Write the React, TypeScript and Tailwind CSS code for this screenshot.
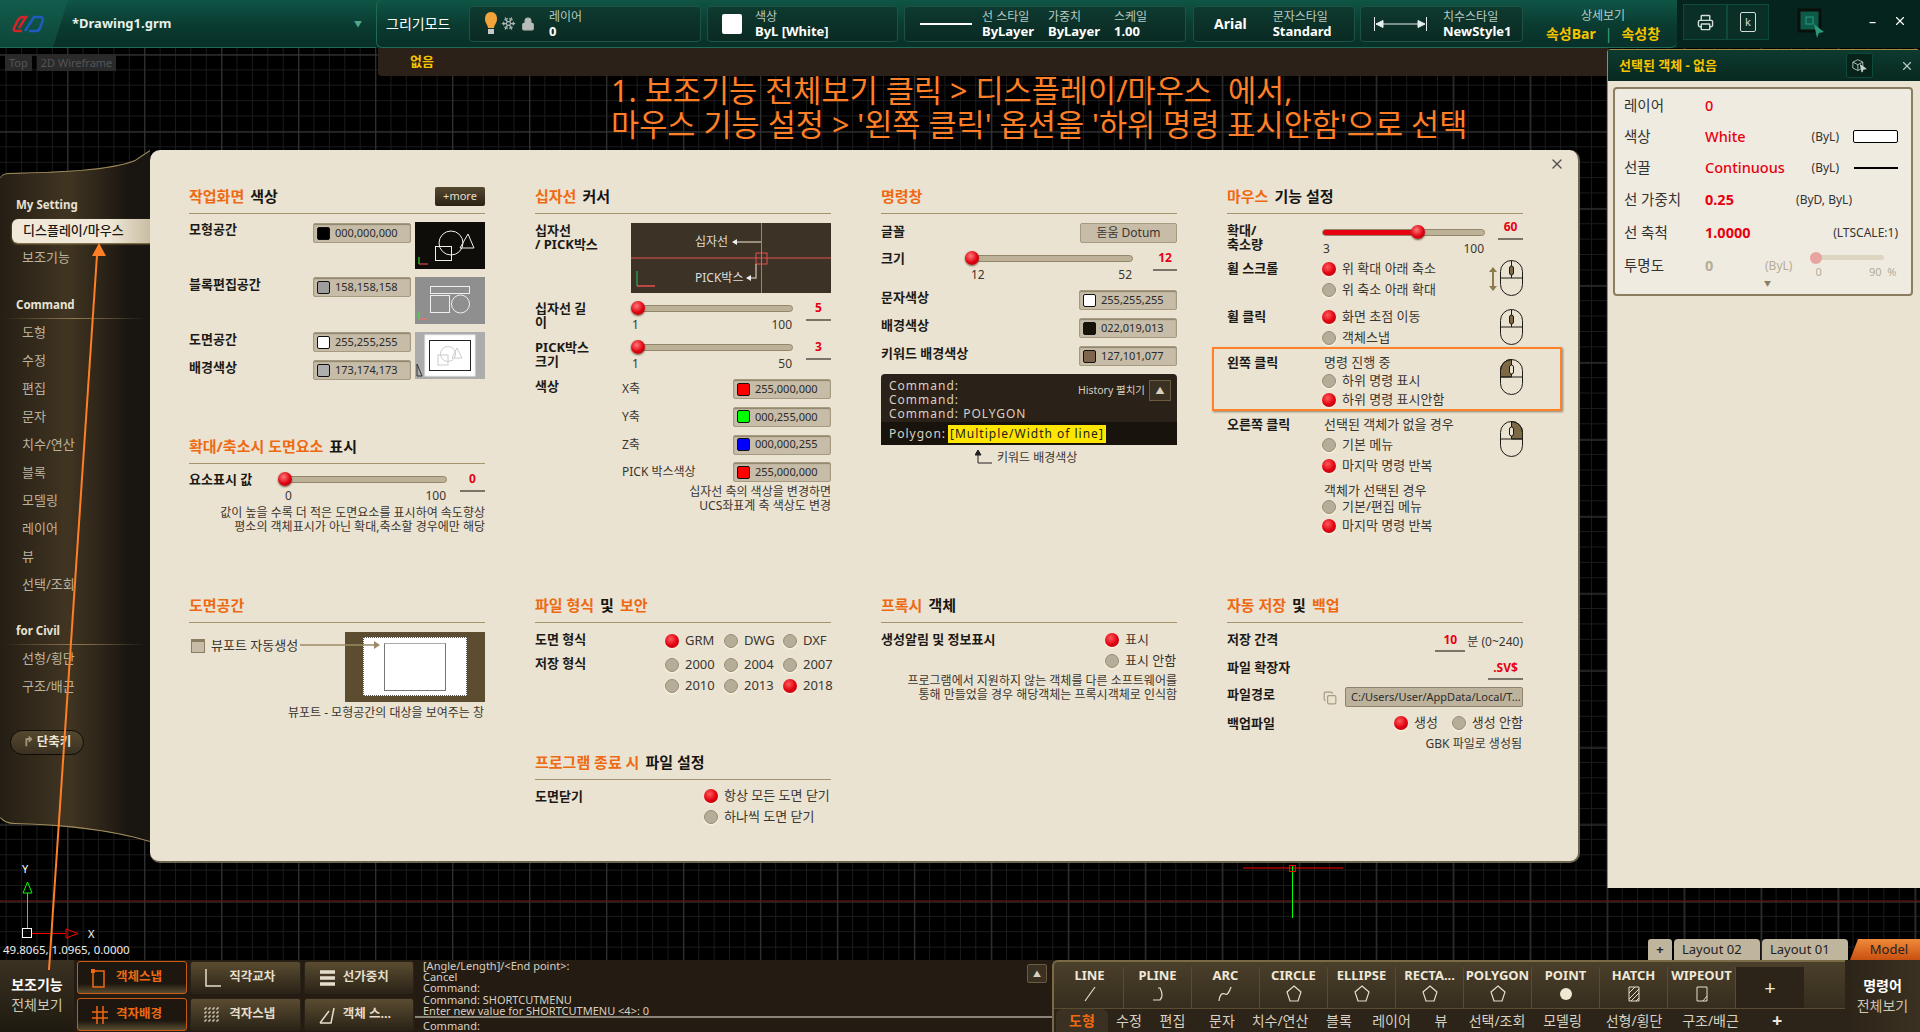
import type { ReactNode } from "react";
import { Copy, Lock, Printer, Snowflake, X } from "lucide-react";

const red = "text-[#e60012]";

const Title = ({ parts }: { parts: [string, boolean][] }) => (
  <div className="flex gap-[6px] text-[15px] font-bold leading-[18px]">
    {parts.map(([text, accent]) => (
      <span key={text} className={accent ? "text-[#ee6a12]" : "text-[#171512]"}>
        {text}
      </span>
    ))}
  </div>
);

const Section = ({ parts, right, children }: { parts: [string, boolean][]; right?: ReactNode; children: ReactNode }) => (
  <div>
    <div className="flex h-[27px] items-start justify-between border-b border-[#a6946f]">
      <Title parts={parts} />
      {right}
    </div>
    {children}
  </div>
);

const Label = ({ children, className = "" }: { children: ReactNode; className?: string }) => (
  <div className={`shrink-0 text-[13px] font-bold leading-[14px] text-[#1c1a16] ${className}`}>{children}</div>
);

const Note = ({ children, className = "" }: { children: ReactNode; className?: string }) => (
  <div className={`text-right text-[12px] leading-[13.5px] text-[#3a3630] ${className}`}>{children}</div>
);

const Knob = ({ left }: { left: number }) => (
  <div
    className="absolute top-1/2 size-[14px] -translate-y-1/2 rounded-full bg-[radial-gradient(circle_at_40%_35%,#ff7a7a,#e00010_55%,#8e0c0e)] shadow-[0_1px_2px_#6b5c40]"
    style={{ left }}
  />
);

const Slider = ({
  width,
  min,
  max,
  pos = 0,
  fill = 0,
  minClass = "pl-[1px]",
}: {
  width: string;
  min: string;
  max: string;
  pos?: number;
  fill?: number;
  minClass?: string;
}) => (
  <div className={width}>
    <div className="relative flex h-[14px] items-center">
      <div className="h-[7px] w-full overflow-hidden rounded-full border border-[#94866a] bg-[#bdb197]">
        {fill > 0 && <div className="h-full bg-[#e60012]" style={{ width: fill }} />}
      </div>
      <Knob left={pos} />
    </div>
    <div className={`flex h-[20px] items-center justify-between pr-[1px] text-[12px] text-[#3a3630] ${minClass}`}>
      <span>{min}</span>
      <span>{max}</span>
    </div>
  </div>
);

const Value = ({ children, className = "w-[25px]" }: { children: ReactNode; className?: string }) => (
  <div className={`h-[20px] border-b-2 border-[#7a7468] text-center text-[12px] font-bold leading-[14px] ${red} ${className}`}>
    {children}
  </div>
);

const Swatch = ({ color, text, className = "" }: { color: string; text: string; className?: string }) => (
  <div
    className={`flex h-[20px] w-[98px] items-center gap-[5px] rounded-[2px] border border-[#a69a80] bg-[#c6bca7] pl-[3px] text-[11px] text-[#2b2b2b] shadow-[inset_0_1px_1px_#8d826b] ${className}`}
  >
    <span className={`size-[13px] rounded-[2px] border border-[#111] ${color}`} />
    {text}
  </div>
);

const Radio = ({ on = false, label, tight = false }: { on?: boolean; label: string; tight?: boolean }) => (
  <div className={`flex items-center gap-[6px] text-[13px] text-[#3a3630] ${tight ? "h-[19px]" : "h-[21px]"}`}>
    <span
      className={`size-[14px] shrink-0 rounded-full shadow-[0_1px_2px_#fff8e0] ${
        on
          ? "bg-[radial-gradient(circle_at_40%_35%,#ff5a5a,#e00010_55%,#a00d10)]"
          : "border border-[#958d78] bg-[#b5ad98]"
      }`}
    />
    {label}
  </div>
);

const MouseIcon = ({ mode }: { mode: "wheel" | "left" | "right" }) => (
  <svg viewBox="0 0 23 36" className="h-[36px] w-[23px] shrink-0" fill="none" stroke="#1c1a16" strokeWidth="1">
    {mode === "left" && <path d="M11.5 .5 A11 11 0 0 0 .5 11.5 V18 H11.5 Z" fill="#7d6a44" />}
    {mode === "right" && <path d="M11.5 .5 A11 11 0 0 1 22.5 11.5 V18 H11.5 Z" fill="#7d6a44" />}
    <rect x=".5" y=".5" width="22" height="35" rx="11" />
    <path d="M.5 18 H22.5 M11.5 .5 V18" />
    <rect x="9.5" y="6" width="4" height="9" rx="2" fill={mode === "wheel" ? "#7d6a44" : "#ebe3d2"} />
  </svg>
);

const Preview = ({ kind }: { kind: "model" | "block" | "paper" }) => {
  if (kind === "model")
    return (
      <svg viewBox="0 0 70 47" className="h-[47px] w-[70px] bg-[#0f0d0a]" fill="none" stroke="#eee">
        <rect x="20.5" y="24.5" width="16" height="14" />
        <circle cx="36" cy="21" r="12" />
        <path d="M53 12 L45 26 H59 Z" />
        <path d="M4 35 V42" stroke="#2f2" />
        <path d="M4 42 H13" stroke="#f55" />
      </svg>
    );
  if (kind === "block")
    return (
      <svg viewBox="0 0 70 47" className="h-[47px] w-[70px] bg-[#8f8f8f]" fill="none" stroke="#eee">
        <rect x="15.5" y="9.5" width="39" height="7" />
        <rect x="15.5" y="18.5" width="19" height="17" />
        <circle cx="45.5" cy="27" r="9" />
        <path d="M4 35 V42" stroke="#2f2" />
        <path d="M4 42 H13" stroke="#f66" />
      </svg>
    );
  return (
    <svg viewBox="0 0 70 47" className="h-[47px] w-[70px] bg-[#acacac]" fill="none">
      <rect x="10" y="3" width="50" height="41" fill="#fff" stroke="#eee" />
      <rect x="14.5" y="8.5" width="41" height="30" stroke="#222" />
      <rect x="23" y="23" width="10" height="10" stroke="#ccc" />
      <circle cx="33" cy="22" r="7.5" stroke="#ccc" />
      <path d="M42 16 L37 26 H47 Z" stroke="#ccc" />
      <path d="M2 44 V32 L7 44 Z" stroke="#333" />
    </svg>
  );
};

const CrosshairPreview = () => (
  <svg viewBox="0 0 200 70" className="h-[70px] w-[200px] bg-[#3c3326]" fill="none">
    <path d="M0 35 H200" stroke="#e65050" />
    <path d="M130.5 0 V70" stroke="#22c55e" />
    <rect x="125" y="30" width="11" height="11" stroke="#e65050" />
    <path d="M130 19 H102 M125 41 V55 H116" stroke="#b5ad98" strokeWidth="1.5" />
    <path d="M101 19 l5 -3 v6 Z M115 55 l5 -3 v6 Z" fill="#eee" />
    <path d="M6 48 V63" stroke="#22c55e" />
    <path d="M6 63 H24" stroke="#e65050" strokeWidth="1.5" />
    <text x="64" y="23" fontSize="12" fill="#ddd">십자선</text>
    <text x="64" y="59" fontSize="12" fill="#ddd">PICK박스</text>
  </svg>
);

const CommandSample = () => (
  <div className="mt-[8px] h-[71px] w-[296px] overflow-hidden rounded-t-[4px] bg-[#2a2118] text-[12px] tracking-[1px] text-[#d8d0c0]">
    <div className="flex h-[48px] justify-between pl-[8px] pr-[6px] pt-[5px]">
      <div className="leading-[14px]">
        <div>Command:</div>
        <div>Command:</div>
        <div>Command: POLYGON</div>
      </div>
      <div className="flex items-start gap-[4px] pt-[1px] text-[10.5px] tracking-normal">
        <span className="mt-[3px]">History 펼치기</span>
        <span className="flex h-[21px] w-[22px] items-center justify-center border border-[#6b5c40] bg-[#3a3122] text-[9px]">▲</span>
      </div>
    </div>
    <div className="flex h-[23px] items-center gap-[2px] bg-[#18130d] pl-[8px]">
      <span>Polygon:</span>
      <span className="bg-[#ffe600] px-[2px] text-[#222]">[Multiple/Width of line]</span>
    </div>
  </div>
);

const ColumnOne = () => (
  <>
    <div>
      <Section
        parts={[["작업화면", true], ["색상", false]]}
        right={
          <div className="flex h-[19px] w-[50px] items-center justify-center rounded-[2px] bg-[linear-gradient(#55482f,#2b2317)] text-[11px] text-[#e6decc]">
            +more
          </div>
        }
      >
        <div className="mt-[8px] flex h-[47px] justify-between">
          <div className="flex w-[222px] justify-between">
            <Label>모형공간</Label>
            <Swatch color="bg-black" text="000,000,000" className="mt-[1px]" />
          </div>
          <Preview kind="model" />
        </div>
        <div className="mt-[8px] flex h-[47px] justify-between">
          <div className="flex w-[222px] justify-between">
            <Label>블록편집공간</Label>
            <Swatch color="bg-[#9e9e9e]" text="158,158,158" />
          </div>
          <Preview kind="block" />
        </div>
        <div className="mt-[8px] flex h-[47px] justify-between">
          <div className="flex w-[222px] flex-col gap-[8px]">
            <div className="flex justify-between">
              <Label>도면공간</Label>
              <Swatch color="bg-white" text="255,255,255" />
            </div>
            <div className="flex justify-between">
              <Label>배경색상</Label>
              <Swatch color="bg-[#adaead]" text="173,174,173" />
            </div>
          </div>
          <Preview kind="paper" />
        </div>
      </Section>
      <div className="mt-[58px]">
        <Section parts={[["확대/축소시 도면요소", true], ["표시", false]]}>
          <div className="mt-[8px] flex">
            <Label className="w-[89px]">요소표시 값</Label>
            <Slider width="w-[169px]" min="0" max="100" minClass="pl-[7px]" />
            <Value className="ml-[13px] w-[25px]">0</Value>
          </div>
          <Note>
            값이 높을 수록 더 적은 도면요소를 표시하여 속도향상
            <br />
            평소의 객체표시가 아닌 확대,축소할 경우에만 해당
          </Note>
        </Section>
      </div>
    </div>
    <Section parts={[["도면공간", true]]}>
      <div className="relative mt-[9px] flex h-[70px] items-start justify-between">
        <div className="flex items-center gap-[6px] pl-[2px] pt-[4px] text-[13px] text-[#3a3630]">
          <span className="size-[14px] border border-[#8b7d61] bg-[linear-gradient(#8b7d61_2px,#c6bca7_2px)]" />
          뷰포트 자동생성
        </div>
        <div className="flex h-[70px] w-[140px] items-start justify-center bg-[#5c4c30] pt-[5px]">
          <div className="flex h-[59px] w-[104px] justify-center border border-dotted border-[#555] bg-white pt-[5px]">
            <div className="h-[48px] w-[62px] border border-[#777] border-t-[#aaa]" />
          </div>
        </div>
        <svg viewBox="0 0 80 8" className="absolute left-[111px] top-[9px] h-[8px] w-[80px]">
          <path d="M0 4 H74" stroke="#9b8a64" strokeWidth="1.5" />
          <path d="M74 0 L80 4 L74 8 Z" fill="#9b8a64" />
        </svg>
      </div>
      <Note className="mt-[4px] pr-[1px]">뷰포트 - 모형공간의 대상을 보여주는 창</Note>
    </Section>
  </>
);

const AxisRow = ({ axis, color, text, label }: { axis: string; color: string; text: string; label?: string }) => (
  <div className="flex h-[20px]">
    <Label className="w-[87px]">{label}</Label>
    <div className="w-[111px] pt-[1px] text-[12px] text-[#3a3630]">{axis}</div>
    <Swatch color={color} text={text} />
  </div>
);

const ColumnTwo = () => (
  <>
    <Section parts={[["십자선", true], ["커서", false]]}>
      <div className="mt-[9px] flex">
        <Label className="w-[96px]">
          십자선
          <br />/ PICK박스
        </Label>
        <CrosshairPreview />
      </div>
      <div className="mt-[8px] flex">
        <Label className="w-[96px]">
          십자선 길
          <br />이
        </Label>
        <Slider width="w-[162px]" min="1" max="100" />
        <Value className="ml-[13px] w-[25px]">5</Value>
      </div>
      <div className="mt-[5px] flex">
        <Label className="w-[96px]">
          PICK박스
          <br />
          크기
        </Label>
        <Slider width="w-[162px]" min="1" max="50" />
        <Value className="ml-[13px] w-[25px]">3</Value>
      </div>
      <div className="mt-[5px] flex flex-col gap-[7.75px]">
        <AxisRow label="색상" axis="X축" color="bg-[#ff0000]" text="255,000,000" />
        <AxisRow axis="Y축" color="bg-[#00ff00]" text="000,255,000" />
        <AxisRow axis="Z축" color="bg-[#0000ff]" text="000,000,255" />
        <AxisRow axis="PICK 박스색상" color="bg-[#ff0000]" text="255,000,000" />
      </div>
      <Note className="mt-[3px]">
        십자선 축의 색상을 변경하면
        <br />
        UCS좌표계 축 색상도 변경
      </Note>
    </Section>
    <div>
      <Section parts={[["파일 형식", true], ["및", false], ["보안", true]]}>
        <div className="mt-[7px] flex">
          <Label className="w-[130px] pt-[2px]">도면 형식</Label>
          <div className="grid grid-cols-[59px_59px_47px]">
            <Radio on label="GRM" />
            <Radio label="DWG" />
            <Radio label="DXF" />
          </div>
        </div>
        <div className="mt-[3px] flex">
          <Label className="w-[130px] pt-[2px]">저장 형식</Label>
          <div className="grid grid-cols-[59px_59px_47px]">
            <Radio label="2000" />
            <Radio label="2004" />
            <Radio label="2007" />
            <Radio label="2010" />
            <Radio label="2013" />
            <Radio on label="2018" />
          </div>
        </div>
      </Section>
      <div className="mt-[57px]">
        <Section parts={[["프로그램 종료 시", true], ["파일 설정", false]]}>
          <div className="mt-[5px] flex">
            <Label className="w-[169px] pt-[4px]">도면닫기</Label>
            <div>
              <Radio on label="항상 모든 도면 닫기" />
              <Radio label="하나씩 도면 닫기" />
            </div>
          </div>
        </Section>
      </div>
    </div>
  </>
);

const ColumnThree = () => (
  <>
    <Section parts={[["명령창", true]]}>
      <div className="mt-[9px] flex h-[20px] justify-between">
        <Label className="pt-[1px]">글꼴</Label>
        <div className="flex h-[20px] w-[97px] items-center justify-center rounded-[2px] border border-[#a69a80] bg-[#c6bca7] text-[12px] text-[#3a3630]">
          돋움 Dotum
        </div>
      </div>
      <div className="mt-[8px] flex">
        <Label className="w-[84px]">크기</Label>
        <Slider width="w-[168px]" min="12" max="52" minClass="pl-[6px]" />
        <Value className="ml-[20px] w-[24px]">12</Value>
      </div>
      <div className="mt-[5px] flex flex-col gap-[8px]">
        <div className="flex justify-between">
          <Label>문자색상</Label>
          <Swatch color="bg-white" text="255,255,255" />
        </div>
        <div className="flex justify-between">
          <Label>배경색상</Label>
          <Swatch color="bg-[#161309]" text="022,019,013" />
        </div>
        <div className="flex justify-between">
          <Label>키워드 배경색상</Label>
          <Swatch color="bg-[#7f654d]" text="127,101,077" />
        </div>
      </div>
      <CommandSample />
      <div className="flex h-[22px] items-end gap-[5px] pl-[94px] text-[12px] text-[#3a3630]">
        <svg viewBox="0 0 17 16" className="mb-[1px] h-[16px] w-[17px]" fill="none" stroke="#222">
          <path d="M3 1 V13 H17" />
          <path d="M0 5 L3 0 L6 5 Z" fill="#222" />
        </svg>
        키워드 배경색상
      </div>
    </Section>
    <Section parts={[["프록시", true], ["객체", false]]}>
      <div className="mt-[6px] flex">
        <Label className="w-[224px] pt-[3px]">생성알림 및 정보표시</Label>
        <div>
          <Radio on label="표시" />
          <Radio label="표시 안함" />
        </div>
      </div>
      <Note className="mt-[3px]">
        프로그램에서 지원하지 않는 객체를 다른 소프트웨어를
        <br />
        통해 만들었을 경우 해당객체는 프록시객체로 인식함
      </Note>
    </Section>
  </>
);

const ColumnFour = () => (
  <>
    <Section parts={[["마우스", true], ["기능 설정", false]]}>
      <div className="mt-[9px] flex">
        <Label className="w-[95px]">
          확대/
          <br />
          축소량
        </Label>
        <div className="pt-[2px]">
          <Slider width="w-[163px]" min="3" max="100" pos={89} fill={96} />
        </div>
        <Value className="ml-[13px] -mt-[3px] w-[25px]">60</Value>
      </div>
      <div className="-mt-[1px] flex h-[42px]">
        <Label className="w-[95px] pt-[3px]">휠 스크롤</Label>
        <div className="flex-1">
          <Radio on label="위 확대 아래 축소" />
          <Radio label="위 축소 아래 확대" />
        </div>
        <svg viewBox="0 0 8 24" className="mr-[3px] mt-[9px] h-[24px] w-[8px]" fill="#8d7a4f">
          <path d="M4 0 L8 5 H5 V19 H8 L4 24 L0 19 H3 V5 H0 Z" />
        </svg>
        <div className="pt-[2px]">
          <MouseIcon mode="wheel" />
        </div>
      </div>
      <div className="mt-[6px] flex h-[42px]">
        <Label className="w-[95px] pt-[3px]">휠 클릭</Label>
        <div className="flex-1">
          <Radio on label="화면 초점 이동" />
          <Radio label="객체스냅" />
        </div>
        <div className="pt-[3px]">
          <MouseIcon mode="wheel" />
        </div>
      </div>
      <div className="-ml-[15px] -mt-[1px] flex h-[64px] w-[350px] border-2 border-[#ff8128] pl-[13px] pr-[37px] shadow-[1px_1px_2px_#8d826b]">
        <Label className="w-[95px] pt-[6px]">왼쪽 클릭</Label>
        <div className="flex-1 pt-[6px]">
          <div className="pl-[2px] text-[13px] leading-[14px] text-[#3a3630]">명령 진행 중</div>
          <div className="mt-[2px]">
            <Radio tight label="하위 명령 표시" />
            <Radio tight on label="하위 명령 표시안함" />
          </div>
        </div>
        <div className="pt-[10px]">
          <MouseIcon mode="left" />
        </div>
      </div>
      <div className="mt-[6px] flex">
        <Label className="w-[95px]">오른쪽 클릭</Label>
        <div className="flex-1">
          <div className="pl-[2px] text-[13px] leading-[14px] text-[#3a3630]">선택된 객체가 없을 경우</div>
          <div className="mt-[3px]">
            <Radio label="기본 메뉴" />
            <Radio on label="마지막 명령 반복" />
          </div>
          <div className="mt-[7px] pl-[2px] text-[13px] leading-[14px] text-[#3a3630]">객체가 선택된 경우</div>
          <Radio tight label="기본/편집 메뉴" />
          <Radio tight on label="마지막 명령 반복" />
        </div>
        <div className="pt-[4px]">
          <MouseIcon mode="right" />
        </div>
      </div>
    </Section>
    <Section parts={[["자동 저장", true], ["및", false], ["백업", true]]}>
      <div className="mt-[7px] flex h-[22px] items-start">
        <Label className="pt-[2px]">저장 간격</Label>
        <div className="ml-auto flex items-start text-[12px] text-[#3a3630]">
          <div className={`h-[22px] w-[30px] border-b-2 border-[#7a7468] text-center font-bold leading-[20px] ${red}`}>10</div>
          <span className="ml-[2px] mt-[3px]">분 (0~240)</span>
        </div>
      </div>
      <div className="mt-[6px] flex h-[22px] items-start justify-between">
        <Label className="pt-[2px]">파일 확장자</Label>
        <div className={`h-[22px] w-[35px] border-b-2 border-[#7a7468] text-center text-[12px] font-bold leading-[20px] ${red}`}>.SV$</div>
      </div>
      <div className="mt-[7px] flex h-[20px] items-start">
        <Label>파일경로</Label>
        <Copy className="ml-auto mt-[4px] size-[14px] text-[#a69a80]" />
        <div className="ml-[8px] flex h-[20px] w-[178px] items-center rounded-[2px] border border-[#8d826b] bg-[#bdb39d] pl-[5px] text-[11px] text-[#2b2b2b]">
          C:/Users/User/AppData/Local/T...
        </div>
      </div>
      <div className="mt-[5px] flex items-center">
        <Label>백업파일</Label>
        <div className="ml-auto flex w-[129px] justify-between">
          <Radio on label="생성" />
          <Radio label="생성 안함" />
        </div>
      </div>
      <Note className="mt-[4px] pr-[1px]">GBK 파일로 생성됨</Note>
    </Section>
  </>
);

const sideGroups: { title: string; items: string[]; gap: string }[] = [
  { title: "Command", items: ["도형", "수정", "편집", "문자", "치수/연산", "블록", "모델링", "레이어", "뷰", "선택/조회"], gap: "mt-[26px]" },
  { title: "for Civil", items: ["선형/횡단", "구조/배근"], gap: "mt-[24px]" },
];

const Sidebar = () => (
  <div className="relative h-[692px] w-[150px] shrink-0 bg-[linear-gradient(90deg,#241e14,#413522_45%,#2c2418_68%,#191510_85%)] pt-[47px] [clip-path:path('M0_29Q0_24_8_23C60_22_110_20_135_10Q142_5_150_0L150_692C110_680_60_675_15_674Q5_674_0_668Z')]">
    <svg viewBox="0 0 150 692" className="absolute inset-0 h-[692px] w-[150px]" fill="none" stroke="#a08c5c" strokeWidth="2">
      <path d="M0 28Q0 24 8 23C60 22 110 20 135 10Q142 5 150 0" />
      <path d="M150 692C110 680 60 675 15 674Q5 674 0 668" />
    </svg>
    <div className="pl-[16px] text-[11.5px] font-bold leading-[16px] text-[#e8e2d4]">My Setting</div>
    <div className="ml-[12px] mt-[6px] flex h-[24px] items-center rounded-l-[6px] bg-[linear-gradient(90deg,#f0e8d8_70%,#c9bda3)] pl-[11px] text-[13px] font-medium text-[#1c1a16] shadow-[0_1px_2px_#a08c5c]">
      디스플레이/마우스
    </div>
    <div className="flex h-[28px] items-center pl-[22px] pt-[1px] text-[13px] text-[#bdb39d]">보조기능</div>
    {sideGroups.map((group) => (
      <div key={group.title} className={group.gap}>
        <div className="pl-[16px] text-[11.5px] font-bold leading-[16px] text-[#e8e2d4]">{group.title}</div>
        <div className="mx-[4px] mt-[5px] h-[1px] bg-[linear-gradient(90deg,transparent,#8d7a4f,transparent)]" />
        {group.items.map((item) => (
          <div key={item} className="flex h-[28px] items-center pl-[22px] text-[13px] text-[#bdb39d]">
            {item}
          </div>
        ))}
      </div>
    ))}
    <div className="ml-[10px] mt-[29px] flex h-[25px] w-[74px] items-center justify-center gap-[3px] rounded-full border border-[#0f0c08] bg-[linear-gradient(#55482f,#3a3122)] text-[12.5px] font-bold text-[#eee6d4]">
      <span className="text-[#a69a80]">↱</span>단축키
    </div>
  </div>
);

const Dialog = () => (
  <div className="relative h-[713px] w-[1430px] rounded-[10px] border-b-2 border-r-2 border-[#6d6550] bg-[#ebe3d2] pl-[39px] pt-[37px]">
    <X className="absolute right-[13px] top-[6px] size-[16px] text-[#555]" />
    <div className="grid grid-cols-[296px_296px_296px_296px] grid-rows-[409px_auto] gap-x-[50px] [grid-auto-flow:column]">
      <ColumnOne />
      <ColumnTwo />
      <ColumnThree />
      <ColumnFour />
    </div>
  </div>
);

const PropertyPanel = () => (
  <div className="absolute left-[1607px] top-[1px] h-[839px] w-[313px] rounded-t-[4px] border-l border-t border-[#a08c3c] bg-[#ebe3d2]">
    <div className="flex h-[31px] items-center bg-[linear-gradient(#0d3a30,#08291f)] pl-[11px] text-[13px] font-bold text-[#f5c400]">
      <span className="w-[227px]">선택된 객체 - 없음</span>
      <div className="flex h-[25px] w-[27px] items-center justify-center rounded-[2px] border border-[#0d4a3c] bg-[#072219]">
        <svg viewBox="0 0 20 18" className="h-[15px] w-[17px]" fill="none" stroke="#c8d4ce">
          <path d="M2 5 L8 2 L14 5 V12 L8 15 L2 12 Z M2 5 L8 8 L14 5 M8 8 V15" />
          <path d="M11 8 L18 13 L14.5 13.5 L13 17 Z" fill="#c8d4ce" />
        </svg>
      </div>
      <X className="ml-[27px] size-[14px] text-[#b9cbc4]" />
    </div>
    <div className="mx-[5px] mt-[6px] h-[209px] w-[300px] rounded-[4px] border-2 border-[#8b7d61] bg-[#f0ebe0] pl-[9px] pr-[13px] pt-[2px] text-[14.5px] text-[#333]">
      <div className="flex h-[30px] items-center">
        <span className="w-[81px]">레이어</span>
        <span className={`font-medium ${red}`}>0</span>
      </div>
      <div className="flex h-[31px] items-center">
        <span className="w-[81px]">색상</span>
        <span className={`flex-1 font-medium ${red}`}>White</span>
        <span className="text-[12px]">(ByL)</span>
        <span className="ml-[14px] h-[13px] w-[45px] rounded-[2px] border border-black bg-white" />
      </div>
      <div className="flex h-[32px] items-center">
        <span className="w-[81px]">선끌</span>
        <span className={`flex-1 font-medium ${red}`}>Continuous</span>
        <span className="text-[12px]">(ByL)</span>
        <span className="ml-[15px] h-[2px] w-[44px] bg-black" />
      </div>
      <div className="flex h-[32px] items-center">
        <span className="w-[81px]">선 가중치</span>
        <span className={`flex-1 font-bold ${red}`}>0.25</span>
        <span className="mr-[46px] text-[12px]">(ByD, ByL)</span>
      </div>
      <div className="flex h-[33px] items-center">
        <span className="w-[81px]">선 축척</span>
        <span className={`flex-1 font-bold ${red}`}>1.0000</span>
        <span className="text-[12px]">(LTSCALE:1)</span>
      </div>
      <div className="flex h-[33px] items-center">
        <span className="w-[81px]">투명도</span>
        <span className="w-[60px] font-bold text-[#b5ad98]">0</span>
        <span className="text-[12px] text-[#b5ad98]">(ByL)</span>
        <div className="ml-[18px] w-[74px] -mt-[2px]">
          <div className="relative flex h-[12px] items-center">
            <div className="h-[5px] w-full rounded-full bg-[#ddd4c2]" />
            <div className="absolute left-0 top-0 size-[12px] rounded-full bg-[#e8a4a0]" />
          </div>
          <div className="mt-[2px] flex justify-between whitespace-nowrap pl-[5px] text-[11px] leading-[12px] text-[#b5ad98]">
            <span>0</span>
            <span className="-mr-[12px]">90 &nbsp;%</span>
          </div>
        </div>
      </div>
      <div className="-mt-[2px] pl-[140px] text-[7px] leading-[8px] text-[#8b7d61]">▼</div>
    </div>
  </div>
);

const panel = "flex h-[36px] items-center rounded-[4px] border border-[#1d5245] bg-[linear-gradient(#0e3a30,#0a2a23)]";

const Stat = ({ top, bottom, className = "" }: { top: string; bottom: string; className?: string }) => (
  <div className={`whitespace-nowrap pt-[2px] ${className}`}>
    <div className="text-[12px] leading-[14px] text-[#b9cbc4]">{top}</div>
    <div className="text-[13px] font-bold leading-[15px] text-white">{bottom}</div>
  </div>
);

const TopBar = () => (
  <div className="relative flex h-[48px] shrink-0 bg-[linear-gradient(#0f5546,#0a3a30_55%,#083028)]">
    <div className="flex h-[48px] w-[376px] items-center border-b border-[#1f6a57]">
      <div className="flex h-[47px] w-[68px] items-center bg-[linear-gradient(#125c4c,#0d463a)] pl-[12px] [clip-path:polygon(0_0,100%_0,78%_100%,0_100%)]">
        <svg viewBox="0 0 32 18" className="h-[18px] w-[32px]" fill="none" strokeWidth="2.5">
          <path d="M10 16 L4 16 Q1 16 2 13 L6 5 Q8 2 11 2 H14 L7 13" stroke="#d8222a" />
          <path d="M17 16 H24 Q27 16 28 13 L31 5 Q31 2 28 2 H22 L13 16" stroke="#1d5bbf" />
        </svg>
      </div>
      <span className="ml-[4px] text-[13px] font-bold text-[#e6efeb]">*Drawing1.grm</span>
      <span className="ml-auto mr-[14px] text-[8px] text-[#4fa78f]">▼</span>
    </div>
    <div className="flex h-[48px] w-[1301px] items-center rounded-b-[6px] rounded-tl-[6px] border-b border-l border-[#1f6a57] pl-[9px]">
      <span className="w-[83px] text-[14px] text-white">그리기모드</span>
      <div className={`${panel} w-[232px] pl-[14px]`}>
        <svg viewBox="0 0 14 24" className="h-[24px] w-[14px]">
          <path d="M7 0 C11 0 13 3 13 7 C13 11 10 13 10 16 H4 C4 13 1 11 1 7 C1 3 3 0 7 0 Z" fill="#f2a33a" />
          <rect x="4" y="17" width="6" height="5" fill="#c8c8c8" />
        </svg>
        <Snowflake className="ml-[3px] size-[15px] text-[#a9b5b0]" />
        <Lock className="ml-[5px] size-[14px] fill-[#b8bcba] text-[#b8bcba]" />
        <Stat top="레이어" bottom="0" className="ml-[14px]" />
      </div>
      <div className={`${panel} ml-[6px] w-[191px] pl-[14px]`}>
        <span className="size-[20px] rounded-[2px] bg-white" />
        <Stat top="색상" bottom="ByL [White]" className="ml-[13px]" />
      </div>
      <div className={`${panel} ml-[6px] w-[282px] pl-[15px]`}>
        <span className="h-[2px] w-[52px] bg-white" />
        <Stat top="선 스타일" bottom="ByLayer" className="ml-[10px] w-[66px]" />
        <Stat top="가중치" bottom="ByLayer" className="w-[66px]" />
        <Stat top="스케일" bottom="1.00" />
      </div>
      <div className={`${panel} ml-[7px] w-[162px] pl-[20px]`}>
        <span className="text-[14px] font-bold text-white">Arial</span>
        <Stat top="문자스타일" bottom="Standard" className="ml-[26px]" />
      </div>
      <div className={`${panel} ml-[5px] w-[163px] pl-[13px]`}>
        <svg viewBox="0 0 53 14" className="h-[14px] w-[53px]" fill="#e6efeb" stroke="#e6efeb">
          <path d="M.5 0 V14 M52.5 0 V14 M2 7 H51" />
          <path d="M2 7 L9 3.5 V10.5 Z M51 7 L44 3.5 V10.5 Z" />
        </svg>
        <Stat top="치수스타일" bottom="NewStyle1" className="ml-[16px]" />
      </div>
      <div className="ml-[6px] flex-1 pt-[2px] text-center">
        <div className="text-[12px] leading-[15px] text-[#b9cbc4]">상세보기</div>
        <div className="mt-[3px] flex justify-center gap-[9px] text-[14px] font-bold leading-[15px] text-[#f5c400]">
          <span>속성Bar</span>
          <span className="font-normal text-[#4a7]">|</span>
          <span>속성창</span>
        </div>
      </div>
    </div>
    <div className="flex flex-1 items-start bg-[#05241d] pl-[6px] pt-[4px]">
      <div className="flex h-[36px] w-[44px] items-center justify-center border border-[#0d4a3c] bg-[#0a2f27]">
        <Printer className="size-[17px] text-[#d4dcd8]" />
      </div>
      <div className="flex h-[36px] w-[42px] items-center justify-center border border-[#0d4a3c] bg-[#0a2f27]">
        <span className="flex h-[20px] w-[16px] items-center justify-center rounded-[2px] border border-[#d4dcd8] text-[11px] text-[#d4dcd8]">k</span>
      </div>
      <svg viewBox="0 0 30 30" className="ml-[27px] mt-[4px] h-[30px] w-[30px]" fill="none">
        <rect x="3" y="2" width="21" height="21" stroke="#0a0f0c" strokeWidth="3" fill="#0c5a48" />
        <rect x="10" y="9" width="7" height="7" stroke="#2a9a7a" />
        <path d="M18 16 L28 24 L23 25 L21 30 Z" fill="#2a9a7a" />
      </svg>
      <span className="ml-[43px] mt-[7px] text-[14px] text-white">–</span>
      <X className="ml-[17px] mt-[10px] size-[14px] text-white" />
    </div>
  </div>
);

const CanvasMarks = () => (
  <svg viewBox="0 0 1920 1032" className="absolute inset-0 h-[1032px] w-[1920px]" fill="none">
    <path d="M0 901 H1920" stroke="#6b0d0d" />
    <path d="M1243 868 H1343" stroke="#ff0000" />
    <path d="M1292.5 865 V918" stroke="#00ff00" />
    <rect x="1289.5" y="865.5" width="6" height="6" stroke="#ff0000" />
    <path d="M27.5 928 V893" stroke="#00ff00" />
    <path d="M27.5 882 L23 893 H32 Z" stroke="#00ff00" />
    <path d="M32 933.5 H65" stroke="#ff0000" />
    <path d="M78 933.5 L66 929 V938 Z" stroke="#ff0000" />
    <rect x="22.5" y="928.5" width="9" height="9" stroke="#fff" />
    <text x="22" y="873" fontSize="11" fill="#fff">Y</text>
    <text x="88" y="938" fontSize="11" fill="#fff">X</text>
  </svg>
);

const snapButtons: { label: string; on?: boolean; icon: ReactNode }[] = [
  {
    label: "객체스냅",
    on: true,
    icon: (
      <>
        <rect x="3" y="3" width="11" height="16" stroke="#ee6a12" strokeWidth="1.5" />
        <rect x="1" y="1" width="4" height="4" fill="#ee6a12" />
      </>
    ),
  },
  { label: "직각교차", icon: <path d="M3 1 V18 H18" stroke="#e6decc" strokeWidth="1.5" /> },
  { label: "선가중치", icon: <path d="M3 4 H18 M3 10 H18 M3 16 H18" stroke="#e6decc" strokeWidth="3.5" /> },
  { label: "격자배경", on: true, icon: <path d="M7 1 V19 M13 1 V19 M2 7 H18 M2 13 H18" stroke="#ee6a12" strokeWidth="1.5" /> },
  { label: "격자스냅", icon: <path d="M3 2 V18 M7 2 V18 M11 2 V18 M15 2 V18 M1 4 H17 M1 8 H17 M1 12 H17 M1 16 H17" stroke="#e6decc" strokeWidth="1" strokeDasharray="2 2" /> },
  { label: "객체 스...", icon: <path d="M3 18 H14 L17 3 M3 18 L12 6" stroke="#e6decc" strokeWidth="1.5" /> },
];

const pentagon = <path d="M9 2 L16 8 L13 17 H5 L2 8 Z" stroke="#e6decc" strokeWidth="1.2" />;

const tools: { label: string; icon: ReactNode }[] = [
  { label: "LINE", icon: <path d="M4 17 L14 3" stroke="#e6decc" strokeWidth="1.2" /> },
  { label: "PLINE", icon: <path d="M4 16 H11 Q15 12 11 4 H9" stroke="#e6decc" strokeWidth="1.2" /> },
  { label: "ARC", icon: <path d="M2 17 Q3 8 8 10 Q11 12 14 3" stroke="#e6decc" strokeWidth="1.2" /> },
  { label: "CIRCLE", icon: pentagon },
  { label: "ELLIPSE", icon: pentagon },
  { label: "RECTA...", icon: pentagon },
  { label: "POLYGON", icon: pentagon },
  { label: "POINT", icon: <circle cx="9" cy="10" r="6" fill="#f0e8d0" /> },
  { label: "HATCH", icon: <path d="M4 3 H14 V17 H4 Z M4 9 L10 3 M4 15 L14 5 M6 17 L14 9 M11 17 L14 14" stroke="#e6decc" strokeWidth="1" /> },
  { label: "WIPEOUT", icon: <path d="M4 3 H14 V17 H4 Z M14 12 L10 17" stroke="#e6decc" strokeWidth="1" /> },
];

const tabs: { label: string; width: string }[] = [
  { label: "수정", width: "w-[42px]" },
  { label: "편집", width: "w-[45px]" },
  { label: "문자", width: "w-[54px]" },
  { label: "치수/연산", width: "w-[62px]" },
  { label: "블록", width: "w-[56px]" },
  { label: "레이어", width: "w-[49px]" },
  { label: "뷰", width: "w-[50px]" },
  { label: "선택/조회", width: "w-[62px]" },
  { label: "모델링", width: "w-[69px]" },
  { label: "선형/횡단", width: "w-[74px]" },
  { label: "구조/배근", width: "w-[79px]" },
];

const logLines = [
  "[Angle/Length]/<End point>:",
  "Cancel",
  "Command:",
  "Command: SHORTCUTMENU",
  "Enter new value for SHORTCUTMENU <4>: 0",
];

const BottomBar = () => (
  <div className="relative flex h-[72px] shrink-0 bg-[#241c13]">
    <div className="flex w-[74px] flex-col items-center justify-end bg-[linear-gradient(#3a3122,#1f1a10)] pb-[17px] text-[14px] leading-[20px]">
      <span className="font-bold text-white">보조기능</span>
      <span className="text-[#cfc6b5]">전체보기</span>
    </div>
    <div className="ml-[3px] grid w-[337px] grid-cols-3 gap-[3px] pt-[1px]">
      {snapButtons.map((b) => (
        <div
          key={b.label}
          className={`flex h-[33px] items-center gap-[6px] rounded-[3px] border pl-[12px] text-[12.5px] font-bold ${
            b.on
              ? "border-[#c85a14] bg-[linear-gradient(#1d1710_70%,#5a4c30)] text-[#ee6a12]"
              : "border-[#2a2317] bg-[linear-gradient(#5a4c30,#2a2317)] text-[#e6decc]"
          }`}
        >
          <svg viewBox="0 0 20 20" className="size-[20px] shrink-0" fill="none">
            {b.icon}
          </svg>
          {b.label}
        </div>
      ))}
    </div>
    <div className="relative ml-[1px] w-[637px] text-[11px] leading-[11.2px] text-[#d8d0c0]">
      <div className="h-[56px] pl-[8px]">
        {logLines.map((line) => (
          <div key={line}>{line}</div>
        ))}
      </div>
      <div className="h-[2px] bg-[#8a8478]" />
      <div className="pl-[8px] pt-[2px]">Command:</div>
      <div className="absolute right-[5px] top-[4px] flex h-[19px] w-[20px] items-center justify-center rounded-[2px] border border-[#6b5c40] bg-[#3a3122] text-[8px]">▲</div>
    </div>
    <div className="flex w-[793px] flex-col rounded-tl-[6px] border-l-2 border-t-2 border-[#7a6a45] bg-[linear-gradient(#4a3f2a,#2c2418)]">
      <div className="flex h-[46px] pl-[2px] pt-[5px]">
        {tools.map((t) => (
          <div key={t.label} className="flex w-[68px] flex-col items-center border-r border-[#5a4c30]">
            <span className="whitespace-nowrap text-[13px] font-bold leading-[17px] text-[#f0e8d8]">{t.label}</span>
            <svg viewBox="0 0 18 20" className="h-[20px] w-[18px]" fill="none">
              {t.icon}
            </svg>
          </div>
        ))}
        <div className="flex w-[68px] items-center justify-center bg-[#2c2418] text-[20px] text-[#f0e8d8]">+</div>
      </div>
      <div className="flex h-[24px] items-center border-t border-[#5a4c30] bg-[#2c2418] pl-[2px] text-[14px] text-[#d8d0c0]">
        <div className="flex h-[24px] w-[52px] items-center justify-center rounded-t-[6px] bg-[#3a3122] font-bold text-[#ee6a12]">도형</div>
        {tabs.map((tab) => (
          <span key={tab.label} className={`whitespace-nowrap text-center ${tab.width}`}>
            {tab.label}
          </span>
        ))}
        <span className="ml-[22px] text-[18px] font-bold text-[#f0e8d8]">+</span>
      </div>
    </div>
    <div className="flex flex-1 flex-col items-center justify-center bg-[linear-gradient(90deg,#2c2418,#3a3122)] text-[14px] leading-[20px]">
      <span className="font-bold text-white">명령어</span>
      <span className="text-[#cfc6b5]">전체보기</span>
    </div>
  </div>
);

const LayoutTabs = () => (
  <div className="absolute bottom-0 right-0 flex h-[21px] items-end gap-[2px] text-[13px] text-[#222]">
    <div className="flex h-[21px] w-[24px] items-center justify-center rounded-t-[3px] bg-[#bfb59c] font-bold">+</div>
    <div className="flex h-[21px] w-[86px] items-center rounded-t-[4px] bg-[#bfb59c] pl-[8px]">Layout 02</div>
    <div className="flex h-[21px] w-[86px] items-center rounded-t-[4px] bg-[#bfb59c] pl-[8px]">Layout 01</div>
    <div className="flex h-[21px] w-[70px] items-center justify-center bg-[linear-gradient(#f08a3a,#c8500f)] pl-[8px] [clip-path:polygon(8px_0,100%_0,100%_100%,0_100%)]">
      Model
    </div>
  </div>
);

export default function App() {
  return (
    <div className="relative flex h-[1032px] w-[1920px] flex-col overflow-hidden bg-black text-[#ddd] [background-image:linear-gradient(to_right,#383838_1px,transparent_1px),linear-gradient(to_bottom,#383838_1px,transparent_1px),linear-gradient(to_right,#1c1c1c_1px,transparent_1px),linear-gradient(to_bottom,#1c1c1c_1px,transparent_1px)] [background-position:67.3px_54.6px,67.3px_54.6px,5.7px_7.8px,5.7px_7.8px] [background-size:77px_77px,77px_77px,15.4px_15.4px,15.4px_15.4px] [font-family:'Noto_Sans','Noto_Sans_CJK_KR',sans-serif]">
      <CanvasMarks />
      <TopBar />
      <div className="relative flex-1">
        <div className="absolute left-[5px] top-[7px] flex gap-[5px] text-[11px] leading-[16px] text-[#555]">
          <span className="bg-[#2a2a2a] px-[4px]">Top</span>
          <span className="bg-[#2a2a2a] px-[4px]">2D Wireframe</span>
        </div>
        <div className="absolute left-[378px] top-0 h-[28px] w-[1229px] rounded-bl-[4px] bg-[#2c2118] pl-[32px] text-[13px] font-bold leading-[27px] text-[#f5c400]">
          없음
        </div>
        <div className="absolute left-[611px] top-[25px] whitespace-pre text-[30.6px] leading-[34px] text-[#ff7f27]">
          {"1. 보조기능 전체보기 클릭 > 디스플레이/마우스  에서,\n마우스 기능 설정 > '왼쪽 클릭' 옵션을 '하위 명령 표시안함'으로 선택"}
        </div>
        <div className="absolute left-0 top-[102px] flex items-start">
          <Sidebar />
          <Dialog />
        </div>
        <PropertyPanel />
        <LayoutTabs />
        <div className="absolute bottom-[2px] left-[3px] text-[11.5px] leading-[16px] text-[#eee]">49.8065, 1.0965, 0.0000</div>
      </div>
      <BottomBar />
      <svg viewBox="0 0 1920 1032" className="pointer-events-none absolute inset-0 h-[1032px] w-[1920px]">
        <path d="M49 970 L97 255" stroke="#ff7f27" strokeWidth="2" />
        <path d="M99 243 L92 256 H106 Z" fill="#ff7f27" />
      </svg>
    </div>
  );
}
